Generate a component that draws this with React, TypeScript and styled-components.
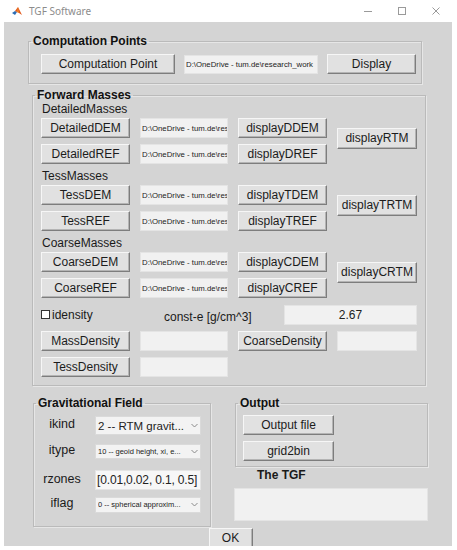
import React from "react";
import styled, { createGlobalStyle } from "styled-components";

const Global = createGlobalStyle`
  html, body { margin: 0; padding: 0; background: #ffffff; }
  body { font-family: "Liberation Sans", Arial, sans-serif; color: #1a1a1a; }
  * { box-sizing: border-box; }
`;

const TitleBar = styled.div`
  height: 22px;
  display: flex;
  align-items: center;
  padding-left: 12px;
  background: #ffffff;
`;

const TitleText = styled.span`
  margin-left: 7px;
  font-family: "Noto Sans", "Open Sans", sans-serif;
  font-size: 10px;
  color: #8c8c8c;
`;

const WinControls = styled.div`
  margin-left: auto;
  margin-right: 4px;
  display: flex;
  height: 22px;
`;

const WinBtn = styled.div`
  width: 34px;
  display: flex;
  align-items: center;
  justify-content: center;
`;

const Frame = styled.div`
  margin: 0 5px 0 4px;
  height: 524px;
  background: #d4d4d4;
  display: flex;
  flex-direction: column;
  padding-bottom: 1px;
`;

const Panel = styled.fieldset<{ $left: number; $width: number; $top: number }>`
  margin: ${(p) => p.$top}px 0 0 ${(p) => p.$left}px;
  width: ${(p) => p.$width}px;
  min-inline-size: 0;
  padding: 0;
  border: 1px solid #bababa;
  box-shadow: 1px 1px 0 #e6e6e6, inset 1px 1px 0 #e6e6e6;
`;

const Legend = styled.legend`
  margin-left: 2px;
  padding: 0 2px;
  font-size: 12px;
  font-weight: bold;
  line-height: 14px;
  color: #111;
`;

const Button = styled.div<{ $w?: number; $h?: number }>`
  width: ${(p) => (p.$w ? `${p.$w}px` : "auto")};
  height: ${(p) => p.$h ?? 20}px;
  background: #e1e1e1;
  border: 1px solid;
  border-color: #f6f6f6 #7d7d7d #7d7d7d #f6f6f6;
  box-shadow: inset -1px -1px 0 #b4b4b4;
  display: flex;
  align-items: center;
  justify-content: center;
  font-size: 12px;
  color: #1c1c1c;
  white-space: nowrap;
  padding-bottom: 1px;
`;

const Field = styled.div<{ $w?: number; $h?: number; $size?: number; $center?: boolean }>`
  width: ${(p) => (p.$w ? `${p.$w}px` : "auto")};
  height: ${(p) => p.$h ?? 20}px;
  background: #f1f1f1;
  border: 1px solid #e4e4e4;
  display: flex;
  align-items: center;
  justify-content: ${(p) => (p.$center ? "center" : "flex-start")};
  padding-left: ${(p) => (p.$center ? 0 : 1)}px;
  font-size: ${(p) => p.$size ?? 7.8}px;
  color: #222;
  white-space: nowrap;
  overflow: hidden;
`;

const CompRow = styled.div`
  display: flex;
  align-items: center;
  padding: 6px 3px 9px 12px;
  gap: 9px;
`;

const ForwardBody = styled.div`
  padding: 0 8px 8px 8px;
  display: flex;
  flex-direction: column;
`;

const Groups = styled.div`
  display: flex;
  flex-direction: column;
  gap: 5px;
`;

const Group = styled.div`
  display: flex;
  flex-direction: column;
`;

const GroupLabel = styled.div`
  font-size: 12px;
  line-height: 14px;
  margin: 0 0 2px 1px;
  color: #1a1a1a;
`;

const MassGrid = styled.div`
  display: grid;
  grid-template-columns: 89px 88px 89px 80px;
  grid-auto-rows: 20px;
  column-gap: 10px;
  row-gap: 6px;
`;

const SideButton = styled(Button)`
  grid-column: 4;
  grid-row: 1 / 3;
  align-self: center;
  height: 21px;
  margin-bottom: 5px;
`;

const DensityRow = styled.div`
  margin-top: 7px;
  height: 20px;
  display: flex;
  align-items: center;
`;

const CheckLabel = styled.label`
  width: 123px;
  display: flex;
  align-items: center;
  font-size: 12px;
  padding-bottom: 1px;
`;

const Box = styled.span`
  width: 9px;
  height: 9px;
  background: #fff;
  border: 1px solid #333;
  margin-right: 2px;
`;

const ConstText = styled.span`
  width: 120px;
  font-size: 12px;
  padding-top: 3px;
`;

const DensityGrid = styled(MassGrid)`
  margin-top: 6px;
`;

const Bottom = styled.div`
  display: flex;
  align-items: flex-start;
  margin-top: 10px;
`;

const GravBody = styled.div`
  padding: 6px 8px 13px 6px;
  display: flex;
  flex-direction: column;
`;

const ParamRow = styled.div<{ $mt: number }>`
  margin-top: ${(p) => p.$mt}px;
  display: flex;
  align-items: center;
`;

const ParamLabel = styled.div`
  width: 44px;
  text-align: center;
  font-size: 12.5px;
  padding-bottom: 3px;
  margin-right: 11px;
`;

const Dropdown = styled.div<{ $h: number; $size: number }>`
  width: 106px;
  height: ${(p) => p.$h}px;
  background: #f3f3f3;
  border: 1px solid #dadada;
  display: flex;
  align-items: center;
  padding-left: 2px;
  font-size: ${(p) => p.$size}px;
  color: #222;
  white-space: nowrap;
  overflow: hidden;
`;

const DropText = styled.span`
  flex: 1;
  overflow: hidden;
`;

const Chevron = styled.span`
  width: 12px;
  flex-shrink: 0;
  display: flex;
  justify-content: center;
`;

const RzField = styled(Field)`
  background: #f7f7f7;
  padding-left: 1px;
  letter-spacing: -0.15px;
`;

const RightCol = styled.div`
  margin-left: 23px;
  width: 194px;
  display: flex;
  flex-direction: column;
`;

const OutputBody = styled.div`
  padding: 5px 0 5px 7px;
  display: flex;
  flex-direction: column;
  gap: 6px;
`;

const TGFLabel = styled.div`
  margin: 1px 0 0 23px;
  font-size: 12px;
  font-weight: bold;
  line-height: 14px;
`;

const TGFField = styled(Field)`
  margin-top: 6px;
`;

const OkRow = styled.div`
  margin-top: 1px;
  display: flex;
  justify-content: center;
  padding-left: 5px;
`;

const shortPath = "D:\\OneDrive - tum.de\\res";
const longPath = "D:\\OneDrive - tum.de\\research_work";

const ChevronIcon = () => (
  <svg width="7" height="5" viewBox="0 0 7 5">
    <polyline points="0.5,1 3.5,4 6.5,1" fill="none" stroke="#8a8a8a" strokeWidth="1" />
  </svg>
);

const MatlabLogo = () => (
  <svg width="10" height="10" viewBox="0 0 10 10">
    <polygon points="0,7 3,5 5,6 3,9" fill="#2a6db5" />
    <polygon points="3,5 6,1 10,9 7,7 5,6" fill="#e2581b" />
    <polygon points="6,1 7,7 5,6" fill="#f08a2c" />
  </svg>
);

type MassGroupProps = {
  title: string;
  rows: [string, string][];
  side: string;
};

const MassGroup = ({ title, rows, side }: MassGroupProps) => (
  <Group>
    <GroupLabel>{title}</GroupLabel>
    <MassGrid>
      {rows.map(([a, b], i) => (
        <React.Fragment key={a}>
          <Button style={{ gridRow: i + 1, gridColumn: 1 }}>{a}</Button>
          <Field style={{ gridRow: i + 1, gridColumn: 2 }}>{shortPath}</Field>
          <Button style={{ gridRow: i + 1, gridColumn: 3 }}>{b}</Button>
        </React.Fragment>
      ))}
      <SideButton>{side}</SideButton>
    </MassGrid>
  </Group>
);

export default function App() {
  return (
    <>
      <Global />
      <TitleBar>
        <MatlabLogo />
        <TitleText>TGF Software</TitleText>
        <WinControls>
          <WinBtn>
            <svg width="10" height="10" viewBox="0 0 10 10">
              <line x1="1" y1="5.5" x2="9" y2="5.5" stroke="#9a9a9a" strokeWidth="1" />
            </svg>
          </WinBtn>
          <WinBtn>
            <svg width="10" height="10" viewBox="0 0 10 10">
              <rect x="1.5" y="1.5" width="7" height="7" fill="none" stroke="#9a9a9a" strokeWidth="1" />
            </svg>
          </WinBtn>
          <WinBtn>
            <svg width="10" height="10" viewBox="0 0 10 10">
              <path d="M1.5 1.5 L8.5 8.5 M8.5 1.5 L1.5 8.5" stroke="#9a9a9a" strokeWidth="1" />
            </svg>
          </WinBtn>
        </WinControls>
      </TitleBar>
      <Frame>
        <Panel $left={24} $width={394} $top={12}>
          <Legend>Computation Points</Legend>
          <CompRow>
            <Button $w={134}>Computation Point</Button>
            <Field $w={134} $h={19}>{longPath}</Field>
            <Button $w={89}>Display</Button>
          </CompRow>
        </Panel>

        <Panel $left={28} $width={394} $top={4}>
          <Legend>Forward Masses</Legend>
          <ForwardBody>
            <Groups>
              <MassGroup
                title="DetailedMasses"
                rows={[
                  ["DetailedDEM", "displayDDEM"],
                  ["DetailedREF", "displayDREF"],
                ]}
                side="displayRTM"
              />
              <MassGroup
                title="TessMasses"
                rows={[
                  ["TessDEM", "displayTDEM"],
                  ["TessREF", "displayTREF"],
                ]}
                side="displayTRTM"
              />
              <MassGroup
                title="CoarseMasses"
                rows={[
                  ["CoarseDEM", "displayCDEM"],
                  ["CoarseREF", "displayCREF"],
                ]}
                side="displayCRTM"
              />
            </Groups>
            <DensityRow>
              <CheckLabel>
                <Box />
                idensity
              </CheckLabel>
              <ConstText>const-e [g/cm^3]</ConstText>
              <Field $w={133} $size={12} $center>
                2.67
              </Field>
            </DensityRow>
            <DensityGrid>
              <Button>MassDensity</Button>
              <Field />
              <Button>CoarseDensity</Button>
              <Field />
              <Button>TessDensity</Button>
              <Field />
            </DensityGrid>
          </ForwardBody>
        </Panel>

        <Bottom>
          <Panel $left={29} $width={178} $top={0}>
            <Legend>Gravitational Field</Legend>
            <GravBody>
              <ParamRow $mt={0}>
                <ParamLabel>ikind</ParamLabel>
                <Dropdown $h={19} $size={11.5}>
                  <DropText>2 -- RTM gravit...</DropText>
                  <Chevron>
                    <ChevronIcon />
                  </Chevron>
                </Dropdown>
              </ParamRow>
              <ParamRow $mt={8}>
                <ParamLabel>itype</ParamLabel>
                <Dropdown $h={15} $size={7.5}>
                  <DropText>10 -- geoid height, xi, e...</DropText>
                  <Chevron>
                    <ChevronIcon />
                  </Chevron>
                </Dropdown>
              </ParamRow>
              <ParamRow $mt={10}>
                <ParamLabel>rzones</ParamLabel>
                <RzField $w={106} $size={12}>
                  [0.01,0.02, 0.1, 0.5]
                </RzField>
              </ParamRow>
              <ParamRow $mt={6}>
                <ParamLabel>iflag</ParamLabel>
                <Dropdown $h={16} $size={7.5}>
                  <DropText>0 -- spherical approxim...</DropText>
                  <Chevron>
                    <ChevronIcon />
                  </Chevron>
                </Dropdown>
              </ParamRow>
            </GravBody>
          </Panel>
          <RightCol>
            <Panel $left={1} $width={193} $top={0}>
              <Legend>Output</Legend>
              <OutputBody>
                <Button $w={91}>Output file</Button>
                <Button $w={91}>grid2bin</Button>
              </OutputBody>
            </Panel>
            <TGFLabel>The TGF</TGFLabel>
            <TGFField $w={194} $h={33} />
          </RightCol>
        </Bottom>
        <OkRow>
          <Button $w={44}>OK</Button>
        </OkRow>
      </Frame>
    </>
  );
}
